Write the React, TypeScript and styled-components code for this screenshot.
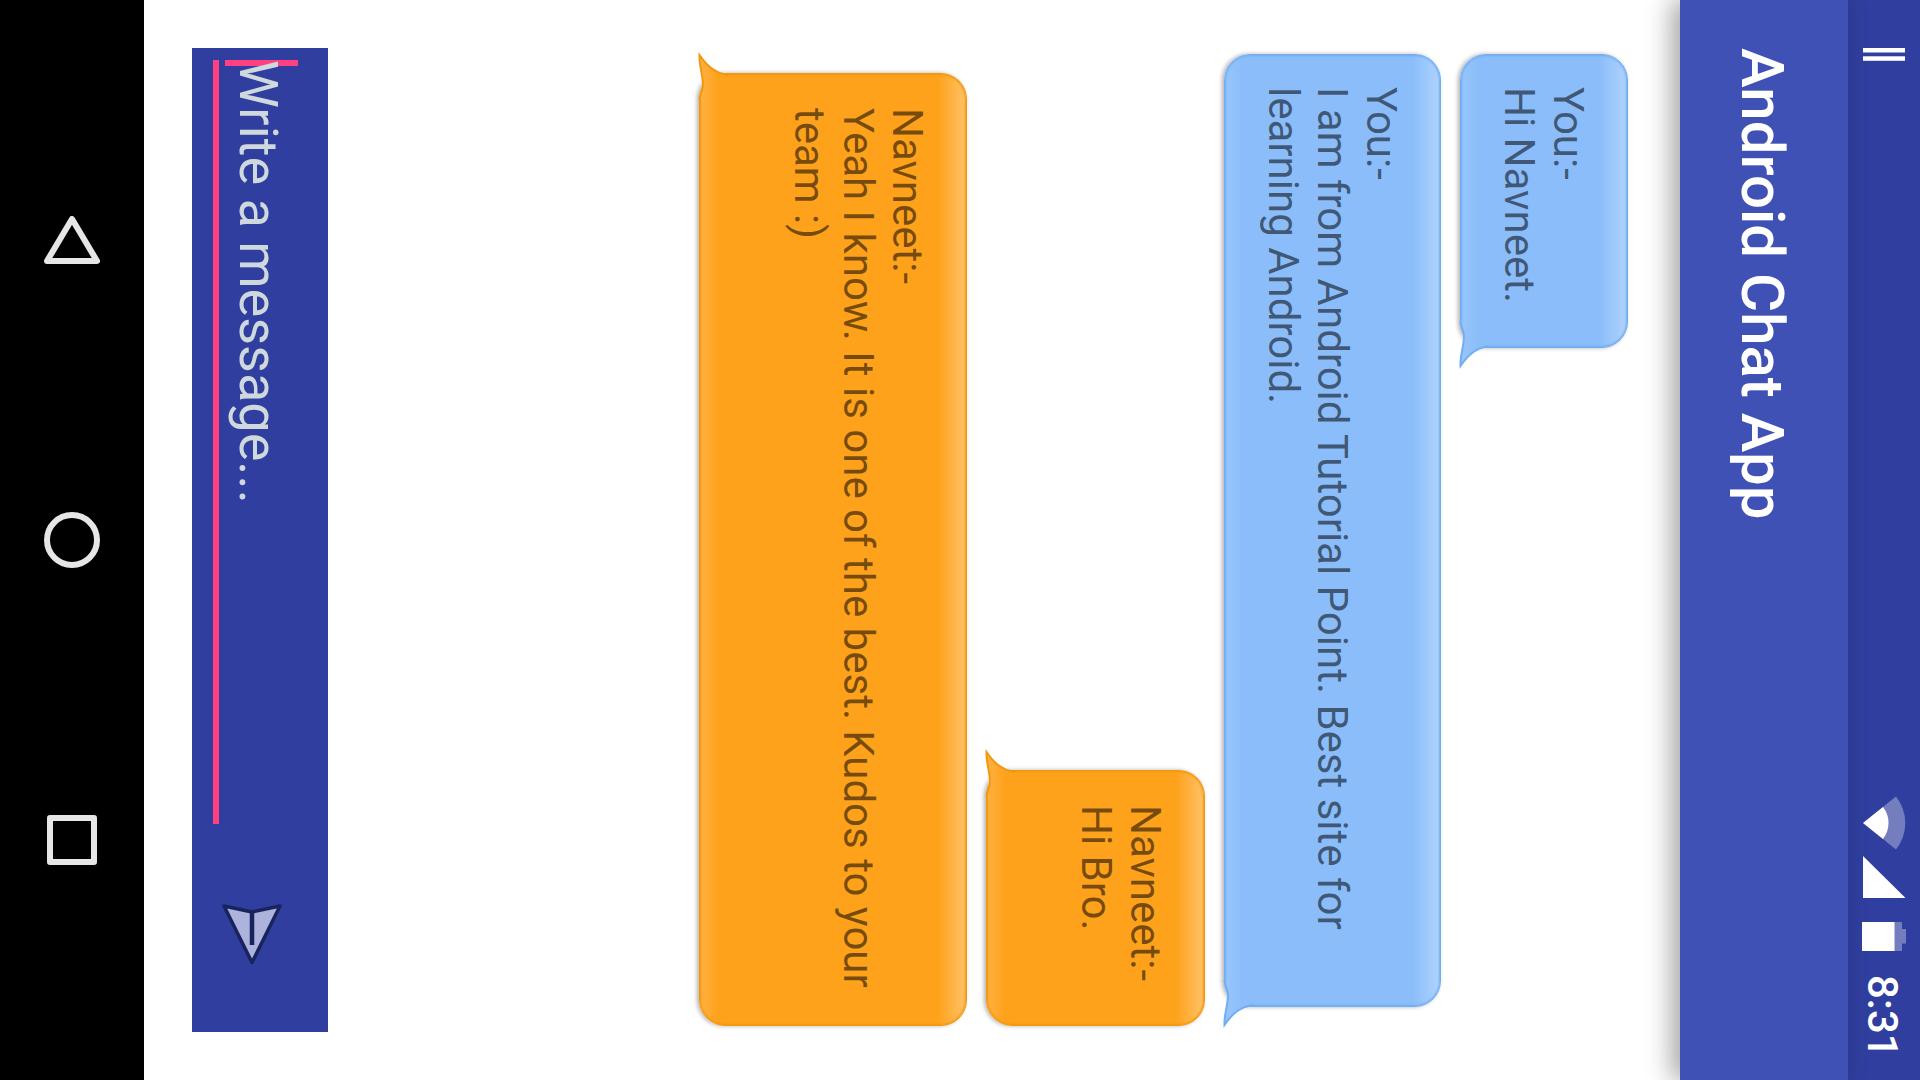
import React from "react";
import styled, { createGlobalStyle } from "styled-components";

const GlobalStyle = createGlobalStyle`
  *, *::before, *::after { box-sizing: border-box; }
  body { margin: 0; background: #fff; }
  button { border: 0; padding: 0; background: none; cursor: pointer; }
  svg { display: block; flex: none; }
`;

/* The handset lies on its side: blocks stack from right to left, text runs downwards. */
const Screen = styled.div`
  writing-mode: vertical-rl;
  text-orientation: sideways;
  display: flex;
  flex-direction: column;
  width: 100vw;
  height: 100vh;
  overflow: hidden;
  background: #fff;
  font-family: Roboto, "Noto Sans", sans-serif;
`;

const StatusBar = styled.header`
  flex: none;
  display: flex;
  align-items: center;
  justify-content: space-between;
  block-size: 72px;
  padding-inline: 48px 22px;
  background: #303f9f;
  color: #fff;
`;

const StatusGroup = styled.div<{ $gap: number }>`
  display: flex;
  align-items: center;
  gap: ${(p) => p.$gap}px;
`;

const Clock = styled.time`
  padding-block-start: 4px;
  font-size: 42px;
  line-height: 48px;
  font-weight: 500;
`;

const Toolbar = styled.div`
  flex: none;
  position: relative;
  display: flex;
  align-items: center;
  block-size: 168px;
  padding-inline: 48px;
  background: #3f51b5;
  box-shadow: -8px 0 24px rgba(0, 0, 0, 0.36);
`;

const Title = styled.h1`
  margin: 0;
  padding-block-start: 4px;
  color: #fff;
  font-size: 60px;
  line-height: 72px;
  font-weight: 500;
`;

const Main = styled.main`
  flex: 1;
  min-block-size: 0;
  display: flex;
  flex-direction: column;
  padding: 48px;
`;

const Messages = styled.ul`
  flex: 1;
  display: flex;
  flex-direction: column;
  gap: 19px;
  margin: 0;
  padding: 0;
  padding-block-start: 4px;
  padding-inline: 6px;
  list-style: none;
`;

type Side = "mine" | "theirs";

const palette = {
  mine: { fill: "#8abdfa", edge: "#72adf4", light: "#b0d3fd", soft: "#98c6fb" },
  theirs: { fill: "#fea21c", edge: "#f3970f", light: "#ffc268", soft: "#ffb144" },
};

const Bubble = styled.li<{ $side: Side }>`
  position: relative;
  align-self: ${(p) => (p.$side === "mine" ? "flex-start" : "flex-end")};
  max-inline-size: calc(100% - 19px);
  padding-block: ${(p) => (p.$side === "mine" ? "34px" : "34px 85px")};
  padding-inline: ${(p) => (p.$side === "mine" ? "32px 44px" : "34px")};
  border: 1px solid ${(p) => palette[p.$side].edge};
  border-radius: 26px;
  background: linear-gradient(
    to left,
    ${(p) => palette[p.$side].light} 0,
    ${(p) => palette[p.$side].fill} 28px,
    ${(p) => palette[p.$side].fill} calc(100% - 18px),
    ${(p) => palette[p.$side].soft} 100%
  );
  box-shadow:
    -2px 0 4px rgba(0, 0, 0, 0.3),
    inset 0 0 2px 1px ${(p) => palette[p.$side].edge};
  color: rgba(0, 0, 0, 0.54);
  font-size: 42px;
  line-height: 49px;
`;

const Author = styled.p`
  margin: 0;
  padding-inline-end: 10px;
`;

const BubbleText = styled.p`
  margin: 0;
`;

const TailMark = styled.svg<{ $side: Side }>`
  position: absolute;
  left: -3px;
  ${(p) => (p.$side === "mine" ? "bottom: -22px;" : "top: -22px; transform: scaleY(-1);")}
  overflow: visible;
`;

const Composer = styled.form`
  flex: none;
  display: flex;
  gap: 12px;
  block-size: 136px;
  padding-block-start: 16px;
  padding-inline-start: 12px;
  background: #303f9f;
`;

const Field = styled.label`
  position: relative;
  flex: 1;
  min-inline-size: 0;
  align-self: flex-end;
  margin-block-end: 21px;
`;

const Caret = styled.span`
  position: absolute;
  inset-block-end: 12px;
  inset-inline-start: 0;
  block-size: 73px;
  inline-size: 6px;
  background: #ff4081;
`;

const MessageInput = styled.input`
  position: relative;
  display: block;
  inline-size: 100%;
  block-size: 78px;
  margin: 0;
  padding: 0;
  padding-block-end: 6px;
  border: 0;
  border-block-end: 6px solid #ff4081;
  border-radius: 0;
  outline: 0;
  background: transparent;
  color: #fff;
  font: inherit;
  font-size: 54px;
  line-height: 64px;

  &::placeholder {
    color: #cfd8dc;
    opacity: 1;
  }
`;

const SendButton = styled.button`
  flex: none;
  display: flex;
  align-items: center;
  justify-content: center;
  inline-size: 196px;
`;

const NavBar = styled.nav`
  flex: none;
  display: flex;
  block-size: 144px;
  padding-inline: 90px;
  background: #000;
`;

const NavButton = styled.button`
  flex: 1;
  display: flex;
  align-items: center;
  justify-content: center;
`;

function Tail({ side }: { side: Side }) {
  const c = palette[side];
  const id = `tail-${side}`;
  return (
    <TailMark $side={side} width="34" height="48" viewBox="0 0 34 48" aria-hidden="true">
      <defs>
        <linearGradient id={id} gradientUnits="userSpaceOnUse" x1="3" y1="0" x2="21" y2="0">
          <stop offset="0" stopColor={c.soft} />
          <stop offset="1" stopColor={c.fill} />
        </linearGradient>
      </defs>
      <path d="M2.500 0C3 8 6.500 10 6 16C5.500 28 2 34 2.500 45C8 37 16 27 31 25V0Z" fill={`url(#${id})`} />
      <path
        d="M2.500 0C3 8 6.500 10 6 16C5.500 28 2 34 2.500 45C8 37 16 27 31 25"
        fill="none"
        stroke={c.edge}
        strokeWidth="2"
      />
    </TailMark>
  );
}

const messages: { side: Side; author: string; text: string }[] = [
  { side: "mine", author: "You", text: "Hi Navneet." },
  { side: "mine", author: "You", text: "I am from Android Tutorial Point. Best site for learning Android." },
  { side: "theirs", author: "Navneet", text: "Hi Bro." },
  { side: "theirs", author: "Navneet", text: "Yeah I know. It is one of the best. Kudos to your team :)" },
];

export default function App() {
  return (
    <>
      <GlobalStyle />
      <Screen>
        <StatusBar>
          <svg width="42" height="13" viewBox="0 0 42 13" fill="#fff" aria-hidden="true">
            <rect width="42" height="4.500" />
            <rect y="8.300" width="42" height="4.500" />
          </svg>
          <StatusGroup $gap={24}>
            <StatusGroup $gap={6}>
              <svg width="43" height="54" viewBox="0 0 43 54" aria-hidden="true">
                <path d="M0 27L33 .5A42.500 42.500 0 0 1 33 53.500Z" fill="#fff" fillOpacity=".33" />
                <path d="M0 27L20 11A26 26 0 0 1 20 43Z" fill="#fff" />
              </svg>
              <svg width="43" height="42" viewBox="0 0 43 42" aria-hidden="true">
                <path d="M0 0V42H42.500Z" fill="#fff" />
              </svg>
            </StatusGroup>
            <svg width="44" height="29" viewBox="0 0 44 29" aria-hidden="true">
              <path d="M32 0H40V7H44V21.500H40V29H32Z" fill="#fff" fillOpacity=".33" />
              <path d="M0 0H32.500V29H0Z" fill="#fff" />
            </svg>
            <Clock>8:31</Clock>
          </StatusGroup>
        </StatusBar>

        <Toolbar>
          <Title>Android Chat App</Title>
        </Toolbar>

        <Main>
          <Messages>
            {messages.map((m) => (
              <Bubble key={m.text} $side={m.side}>
                <Tail side={m.side} />
                <Author>{m.author}:-</Author>
                <BubbleText>{m.text}</BubbleText>
              </Bubble>
            ))}
          </Messages>

          <Composer onSubmit={(e) => e.preventDefault()}>
            <Field>
              <Caret />
              <MessageInput type="text" aria-label="Message" placeholder="Write a message..." />
            </Field>
            <SendButton type="submit" aria-label="Send">
              <svg width="60" height="61" viewBox="0 0 60 61" aria-hidden="true">
                <path
                  d="M2 2L30 8L58 2L30 58.500Z"
                  fill="#adb3dc"
                  stroke="#18245c"
                  strokeWidth="3.500"
                  strokeLinejoin="round"
                />
                <path d="M30 7V41" stroke="#18245c" strokeWidth="4.500" />
              </svg>
            </SendButton>
          </Composer>
        </Main>

        <NavBar>
          <NavButton type="button" aria-label="Back">
            <svg width="56" height="48" viewBox="0 0 56 48" fill="none" stroke="#e6e6e6" strokeWidth="6" strokeLinejoin="round" aria-hidden="true">
              <path d="M28 3L53 45H3Z" />
            </svg>
          </NavButton>
          <NavButton type="button" aria-label="Home">
            <svg width="56" height="56" viewBox="0 0 56 56" fill="none" stroke="#e6e6e6" strokeWidth="6" aria-hidden="true">
              <circle cx="28" cy="28" r="25" />
            </svg>
          </NavButton>
          <NavButton type="button" aria-label="Recent apps">
            <svg width="50" height="50" viewBox="0 0 50 50" fill="none" stroke="#e6e6e6" strokeWidth="6" strokeLinejoin="round" aria-hidden="true">
              <rect x="3" y="3" width="44" height="44" />
            </svg>
          </NavButton>
        </NavBar>
      </Screen>
    </>
  );
}
